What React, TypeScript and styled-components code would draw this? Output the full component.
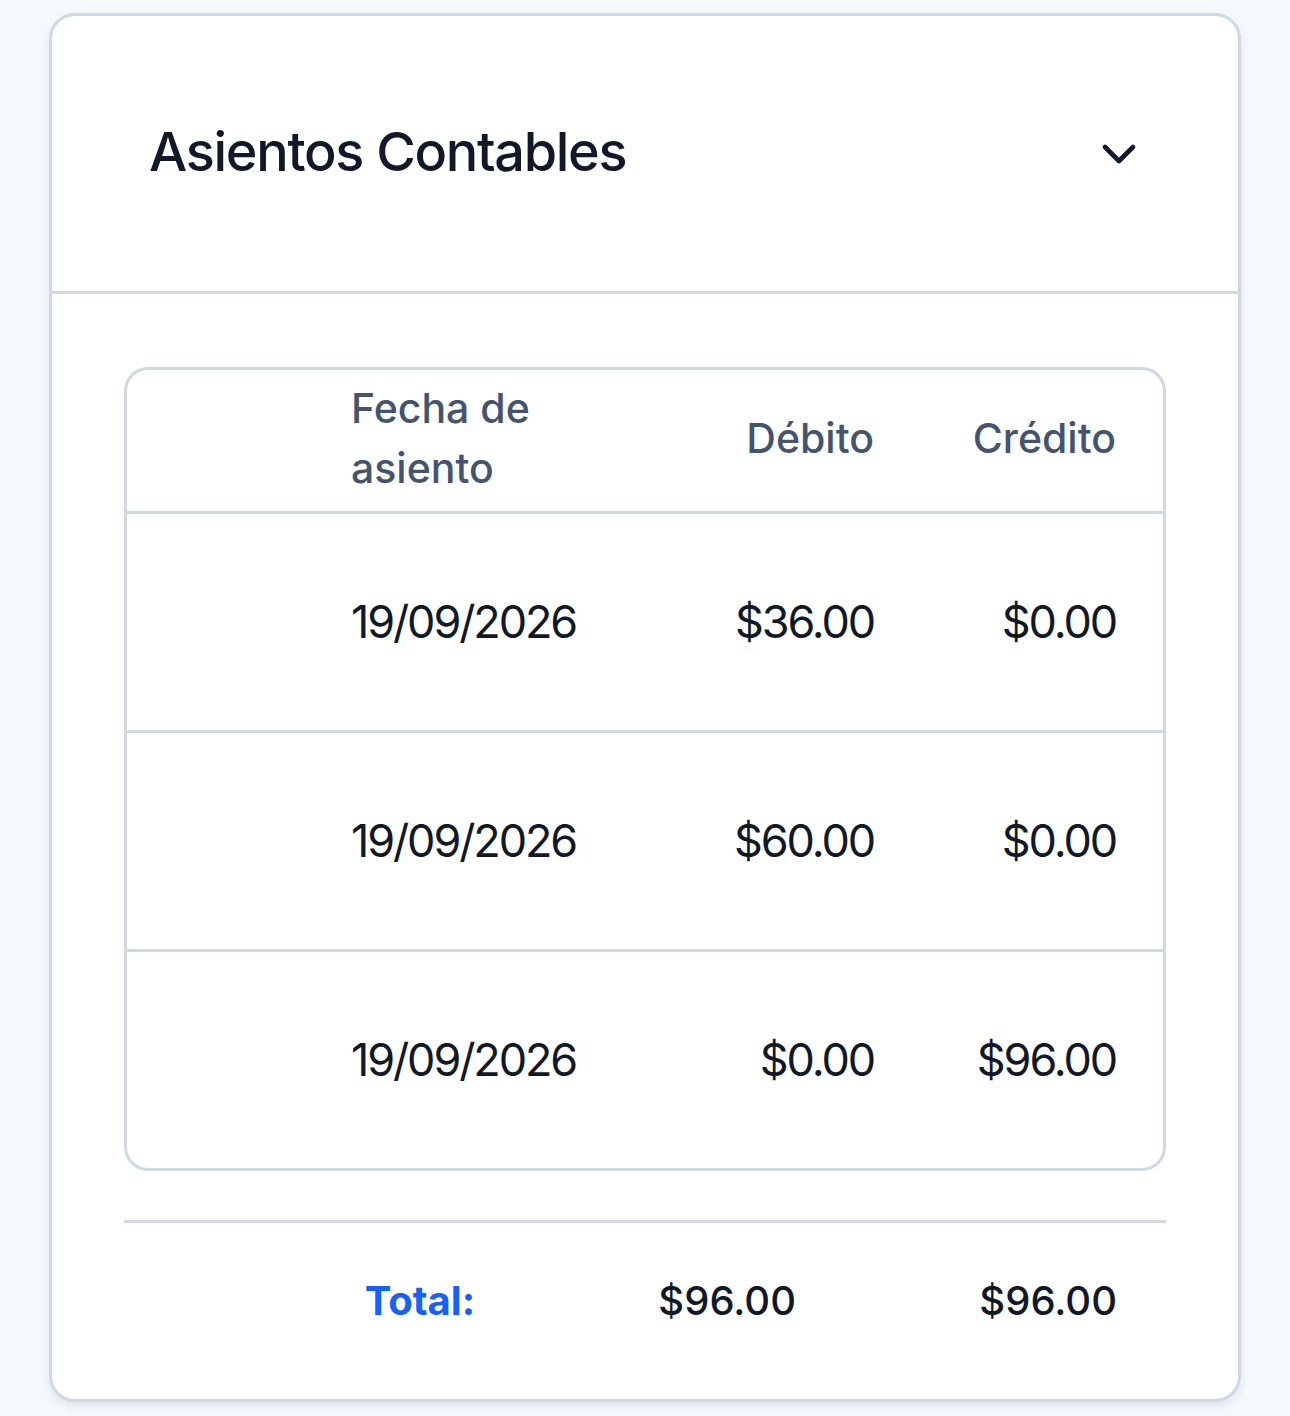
import React from "react";
import styled, { createGlobalStyle } from "styled-components";
import { ChevronDown } from "lucide-react";

const Global = createGlobalStyle`
  html, body { margin: 0; padding: 0; background: #f5f9fc; }
  body { font-family: Inter, "Noto Sans", "Liberation Sans", sans-serif; -webkit-font-smoothing: antialiased; }
`;

const Page = styled.div`
  padding: 13px 49px 14px 49px;
  min-height: 1416px;
  box-sizing: border-box;
`;

const Card = styled.section`
  background: #ffffff;
  border: 3px solid #d0d9e3;
  border-radius: 26px;
  box-shadow: 0 4px 8px rgba(30, 50, 80, 0.1);
  overflow: hidden;
`;

const Header = styled.header`
  height: 275px;
  display: flex;
  align-items: center;
  justify-content: space-between;
  padding: 0 91px 0 97px;
  border-bottom: 3px solid #d0d9e3;
`;

const Title = styled.h2`
  margin: 0 0 5px 0;
  font-size: 54px;
  font-weight: 500;
  color: #111827;
  letter-spacing: -1.3px;
`;

const Toggle = styled.button`
  border: 0;
  background: none;
  padding: 0;
  display: flex;
  color: #111827;
`;

const Body = styled.div`
  padding: 73px 72px 0 72px;
`;

const Table = styled.div`
  border: 3px solid #d0d9e3;
  border-radius: 24px;
  overflow: hidden;
`;

const Row = styled.div<{ $head?: boolean; $last?: boolean }>`
  box-sizing: border-box;
  display: grid;
  grid-template-columns: 200px 324px 247px 266px;
  align-items: center;
  height: ${(p) => (p.$head ? "144px" : p.$last ? "216px" : "219px")};
  padding-bottom: ${(p) => (p.$head ? "6px" : "0")};
  border-bottom: ${(p) => (p.$last ? "none" : "3px solid #d0d9e3")};
  font-size: ${(p) => (p.$head ? "41px" : "45px")};
  font-weight: ${(p) => (p.$head ? 500 : 400)};
  color: ${(p) => (p.$head ? "#44546f" : "#111827")};
  line-height: ${(p) => (p.$head ? "60px" : "54px")};
  letter-spacing: ${(p) => (p.$head ? "0" : "-2.1px")};
`;

const Cell = styled.div<{ $align?: "left" | "right"; $pr?: number }>`
  text-align: ${(p) => p.$align ?? "left"};
  padding-left: ${(p) => (p.$align === "right" ? 0 : 24)}px;
  padding-right: ${(p) => p.$pr ?? 0}px;
`;

const TotalDivider = styled.hr`
  margin: 49px 0 0 0;
  border: 0;
  border-top: 3px solid #d0d9e3;
`;

const TotalRow = styled.div`
  display: grid;
  grid-template-columns: 321px 321px 321px;
  padding: 54px 49px 74px 30px;
  font-size: 40px;
  font-weight: 500;
  line-height: 48px;
  color: #111827;
`;

const TotalCell = styled.div<{ $accent?: boolean }>`
  text-align: right;
  color: ${(p) => (p.$accent ? "#1660fb" : "#111827")};
  font-weight: ${(p) => (p.$accent ? 700 : 500)};
`;

const entries = [
  { date: "19/09/2026", debit: "$36.00", credit: "$0.00" },
  { date: "19/09/2026", debit: "$60.00", credit: "$0.00" },
  { date: "19/09/2026", debit: "$0.00", credit: "$96.00" },
];

export default function App() {
  return (
    <>
      <Global />
      <Page>
        <Card>
          <Header>
            <Title>Asientos Contables</Title>
            <Toggle aria-label="Contraer">
              <ChevronDown size={56} strokeWidth={2} />
            </Toggle>
          </Header>
          <Body>
            <Table>
              <Row $head>
                <Cell />
                <Cell>
                  Fecha de
                  <br />
                  asiento
                </Cell>
                <Cell $align="right" $pr={24}>Débito</Cell>
                <Cell $align="right" $pr={48}>Crédito</Cell>
              </Row>
              {entries.map((e, i) => (
                <Row key={i} $last={i === entries.length - 1}>
                  <Cell />
                  <Cell>{e.date}</Cell>
                  <Cell $align="right" $pr={24}>{e.debit}</Cell>
                  <Cell $align="right" $pr={48}>{e.credit}</Cell>
                </Row>
              ))}
            </Table>
            <TotalDivider />
            <TotalRow>
              <TotalCell $accent>Total:</TotalCell>
              <TotalCell>$96.00</TotalCell>
              <TotalCell>$96.00</TotalCell>
            </TotalRow>
          </Body>
        </Card>
      </Page>
    </>
  );
}
